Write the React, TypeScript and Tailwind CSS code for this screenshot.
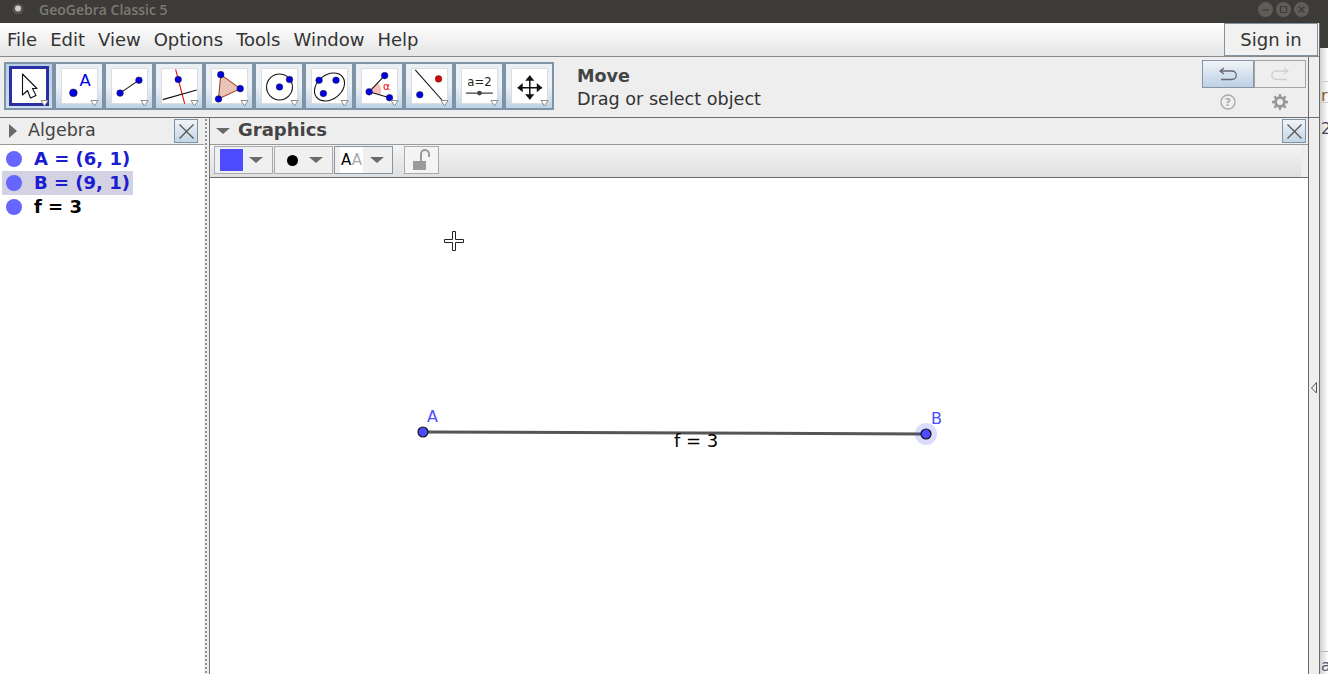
import React from "react";

const Tri = () => (
  <svg width="9" height="8" viewBox="0 0 9 8" className="absolute right-[3px] bottom-[1px]">
    <path d="M1 1.5H8L4.5 7Z" fill="#fff" stroke="#8c8c8c" strokeWidth="1" />
  </svg>
);

const P = ({ x, y, c = "#0000e0", r = 3.4 }: { x: number; y: number; c?: string; r?: number }) => (
  <circle cx={x} cy={y} r={r} fill={c} stroke="#222" strokeWidth="0.5" />
);

const ln = { stroke: "#111", strokeWidth: 1.1 };

const icons: React.ReactNode[] = [
  <path key="0" d="M10.500 5V26L15.500 21.500L18.500 29L24 26.500L20.500 19.500H25Z" fill="#fff" stroke="#111" strokeWidth="1.100" strokeLinejoin="round" />,
  <g key="1">
    <P x={11.7} y={24} r={4} />
    <text x={18} y={17} fontSize="17" fill="#0000e0" fontFamily="'DejaVu Sans'">A</text>
  </g>,
  <g key="2">
    <line x1="8.300" y1="24.300" x2="27.700" y2="11" {...ln} />
    <P x={8.3} y={24.3} />
    <P x={27.7} y={11} />
  </g>,
  <g key="3">
    <line x1="14" y1="0" x2="23.300" y2="35" stroke="#f00000" strokeWidth="1.100" />
    <line x1="0.700" y1="31" x2="35.700" y2="21" {...ln} />
    <P x={16.7} y={10.3} />
  </g>,
  <g key="4">
    <path d="M9 5.300L29 19.700L6.700 30.300Z" fill="#e8c4b8" stroke="#a04020" strokeWidth="1.100" />
    <P x={9} y={5.3} />
    <P x={29} y={19.7} />
    <P x={6.7} y={30.3} />
  </g>,
  <g key="5">
    <circle cx="18" cy="18" r="13.300" fill="none" {...ln} />
    <P x={18} y={18} />
    <P x={28.3} y={10.3} />
  </g>,
  <g key="6">
    <ellipse cx="18" cy="18" rx="17" ry="12.500" transform="rotate(-38 18 18)" fill="none" {...ln} />
    <P x={7.3} y={11} />
    <P x={24.7} y={11} />
    <P x={11.7} y={24.7} />
  </g>,
  <g key="7">
    <path d="M7.300 23L16 13.500A12 12 0 0 1 19 26Z" fill="#f8bcbc" />
    <line x1="7.300" y1="23" x2="23.300" y2="6.300" {...ln} />
    <line x1="7.300" y1="23" x2="28.300" y2="29" {...ln} />
    <P x={7.3} y={23} />
    <P x={23.3} y={6.3} />
    <P x={28.3} y={29} />
    <text x={21.500} y={21} fontSize="11" fill="#f00000" fontFamily="'DejaVu Sans'">α</text>
  </g>,
  <g key="8">
    <line x1="3.300" y1="0.300" x2="34" y2="35" {...ln} />
    <P x={27.3} y={9.7} c="#e00000" />
    <P x={8} y={26} />
  </g>,
  <g key="9">
    <text x={18} y={17} textAnchor="middle" fontSize="12" fill="#222" fontFamily="'DejaVu Sans'">a=2</text>
    <line x1="4" y1="24.300" x2="31.700" y2="24.300" stroke="#222" strokeWidth="1.100" />
    <circle cx="18" cy="24.300" r="2.400" fill="#444" />
  </g>,
  <g key="10">
    <path d="M6 18.700H31M18.300 6.500V30.500" stroke="#111" strokeWidth="1.500" />
    <path d="M18.300 6L23 11.500H13.500ZM18.300 31L23 25.500H13.500ZM5.500 18.700L11 14V23.500ZM31 18.700L25.500 14V23.500Z" fill="#111" />
  </g>,
];

const ToolButton = ({ i }: { i: number }) => (
  <div
    className={
      i === 0
        ? "relative flex h-[48px] w-[50px] shrink-0 items-center justify-center border-2 border-[#7f93a6] bg-gradient-to-b from-[#b7cee4] to-[#cfdeec]"
        : "relative flex h-[48px] w-[50px] shrink-0 items-center justify-center border-2 border-[#7f93a6] bg-gradient-to-b from-[#e8eff5] via-[#edf2f7] to-[#bdd2e6]"
    }
  >
    {i === 0 ? (
      <div className="h-[40px] w-[40px] border-[3px] border-[#2a2fa4] bg-white">
        <svg width="34" height="34" viewBox="0 0 34 34">{icons[0]}</svg>
      </div>
    ) : (
      <div className="flex h-[36px] w-[37px] border border-[#dddddd] bg-white">
        <svg width="36" height="35" viewBox="0 0 36 35">{icons[i]}</svg>
      </div>
    )}
    <Tri />
  </div>
);

const CloseBtn = () => (
  <div className="flex h-[24px] w-[24px] items-center justify-center border border-[#7f93a5] bg-gradient-to-b from-[#f0f4f8] to-[#c3d5e6]">
    <svg width="17" height="17" viewBox="0 0 17 17">
      <path d="M1.500 1.500L15.500 15.500M15.500 1.500L1.500 15.500" stroke="#555" strokeWidth="1.300" />
    </svg>
  </div>
);

const Caret = () => (
  <svg width="14" height="6" viewBox="0 0 14 6" className="block">
    <path d="M0 0H14L7 6Z" fill="#6a6a6a" />
  </svg>
);

const Row = ({ text, color, sel }: { text: string; color: string; sel?: boolean }) => (
  <div className="flex h-[24px] items-center pl-[2px]">
    <div className={`flex h-[24px] items-center ${sel ? "bg-[#d2d2e3]" : ""}`}>
      <span className="ml-[4px] h-[16px] w-[16px] rounded-full bg-[#6666ff]" />
      <span className={`-mt-[1px] ml-[12px] pr-[3px] text-[18px] font-bold ${color}`}>{text}</span>
    </div>
  </div>
);

export default function App() {
  return (
    <div className="flex h-[674px] w-[1328px] flex-col overflow-hidden bg-white font-['DejaVu_Sans',sans-serif] text-[#333]">
      <div className="flex h-[23px] shrink-0 items-center bg-[#3c3b37] pb-[5px] pl-[12px]">
        <svg width="12" height="12" viewBox="0 0 12 12">
          <circle cx="6" cy="6" r="5.500" fill="#55534e" />
          <circle cx="6" cy="5.500" r="3" fill="#cfcdc6" />
        </svg>
        <span className="ml-[15px] font-['Open_Sans',sans-serif] text-[14px] font-semibold text-[#7d7a73]">GeoGebra Classic 5</span>
        <div className="ml-auto mr-[19px] flex gap-[3px]">
          {["M4 8H11", "M4.500 4.500H10.500V10.500H4.500Z", "M4.500 4.500L10.500 10.500M10.500 4.500L4.500 10.500"].map((d) => (
            <svg key={d} width="15" height="15" viewBox="0 0 15 15">
              <circle cx="7.500" cy="7.500" r="7.500" fill="#5f5d58" />
              <path d={d} fill="none" stroke="#3c3b37" strokeWidth="1.200" />
            </svg>
          ))}
        </div>
      </div>
      <div className="flex min-h-0 flex-1">
        <div className="flex w-[1320px] shrink-0 flex-col border-r border-[#6a6a6a]">
          <div className="flex h-[34px] shrink-0 items-center justify-between border-b border-[#8a8a8a] bg-gradient-to-b from-[#ffffff] to-[#e4e4e4] pl-[7px] pr-[1px]">
            <div className="flex gap-[13px] text-[18px] text-[#333]">
              {["File", "Edit", "View", "Options", "Tools", "Window", "Help"].map((m) => (
                <span key={m}>{m}</span>
              ))}
            </div>
            <div className="flex h-[33px] w-[94px] items-center justify-center border border-[#84939f] bg-[#f1f1f1] text-[18px]">Sign in</div>
          </div>
          <div className="flex h-[61px] shrink-0 border-b border-[#6e6e6e] bg-[#eeeeee]">
            <div className="flex w-[1309px] border-r border-[#6e6e6e] pl-[4px] pt-[5px]">
              <div className="flex h-[48px] shrink-0">
                {icons.map((_, i) => (
                  <ToolButton key={i} i={i} />
                ))}
              </div>
              <div className="ml-[23px] mt-[3px] text-[17.600px] leading-[23px]">
                <div className="font-bold text-[#444]">Move</div>
                <div className="text-[#333]">Drag or select object</div>
              </div>
              <div className="ml-auto mr-[2px] -mt-[2px] flex w-[104px] flex-col">
                <div className="flex h-[28px]">
                  <div className="flex w-[52px] items-center justify-center border border-[#8296a8] bg-gradient-to-b from-[#f0f4f8] to-[#bcd1e4]">
                    <svg width="18" height="14" viewBox="0 0 18 14">
                      <path d="M1 4H13A4 4 0 0 1 13 12.500H2M5 1L1 4L5 7" fill="none" stroke="#667" strokeWidth="1.300" />
                    </svg>
                  </div>
                  <div className="flex w-[52px] items-center justify-center border border-[#a5a5a5] bg-[#eeeeee]">
                    <svg width="18" height="14" viewBox="0 0 18 14">
                      <path d="M17 4H5A4 4 0 0 0 5 12.500H16M13 1L17 4L13 7" fill="none" stroke="#cfcfcf" strokeWidth="1.300" />
                    </svg>
                  </div>
                </div>
                <div className="mt-[6px] flex justify-between px-[18px]">
                  <svg width="16" height="16" viewBox="0 0 16 16">
                    <circle cx="8" cy="8" r="7" fill="none" stroke="#aaa" strokeWidth="1.400" />
                    <text x="8" y="12" textAnchor="middle" fontSize="10" fontWeight="700" fill="#aaa" fontFamily="'DejaVu Sans'">?</text>
                  </svg>
                  <svg width="16" height="16" viewBox="0 0 16 16">
                    <circle cx="8" cy="8" r="4.500" fill="none" stroke="#999" strokeWidth="3" />
                    <path d="M8 0V16M0 8H16M2.300 2.300L13.700 13.700M13.700 2.300L2.300 13.700" stroke="#999" strokeWidth="2.400" />
                    <circle cx="8" cy="8" r="3" fill="#eee" />
                  </svg>
                </div>
              </div>
            </div>
          </div>
          <div className="flex min-h-0 flex-1">
            <div className="flex w-[204px] shrink-0 flex-col">
              <div className="flex h-[27px] shrink-0 items-center border-b border-[#999] bg-[#eeeeee] pl-[9px] pr-[6px]">
                <svg width="8" height="14" viewBox="0 0 8 14">
                  <path d="M0 0L8 7L0 14Z" fill="#6a6a6a" />
                </svg>
                <span className="-mt-[2px] ml-[11px] text-[17.500px] text-[#444]">Algebra</span>
                <div className="ml-auto">
                  <CloseBtn />
                </div>
              </div>
              <div className="pt-[2px]">
                <Row text="A = (6, 1)" color="text-[#1c1cd0]" />
                <Row text="B = (9, 1)" color="text-[#1c1cd0]" sel />
                <Row text="f = 3" color="text-black" />
              </div>
            </div>
            <div className="flex w-[6px] shrink-0 border-r border-[#777] bg-[#eeeeee] pl-[1px]">
              <div className="h-full w-[2px] bg-[radial-gradient(circle,#8f959e_1px,transparent_1px)] bg-[length:2px_4px]" />
            </div>
            <div className="flex min-w-0 flex-1 flex-col border-r border-[#6a6a6a]">
              <div className="flex h-[27px] shrink-0 items-center border-b border-[#999] bg-[#eeeeee] pl-[6px] pr-[2px]">
                <Caret />
                <span className="-mt-[3px] ml-[8px] text-[18px] font-bold text-[#444]">Graphics</span>
                <div className="ml-auto">
                  <CloseBtn />
                </div>
              </div>
              <div className="flex h-[33px] shrink-0 border-b border-[#6a6a6a] bg-[#eeeeee]">
                <div className="flex min-w-0 flex-1 items-start gap-[1px] bg-gradient-to-b from-[#f4f4f4] to-[#e0e0e0] pl-[4px] pt-[1px]">
                  <div className="flex h-[28px] w-[59px] items-center border border-[#aaa] bg-[#f0f0f0] pl-[5px]">
                    <span className="h-[22px] w-[23px] bg-[#4d4dff]" />
                    <span className="ml-[6px]"><Caret /></span>
                  </div>
                  <div className="flex h-[28px] w-[59px] items-center border border-[#aaa] bg-[#f0f0f0] pl-[12px]">
                    <span className="h-[11px] w-[11px] rounded-full bg-black" />
                    <span className="ml-[11px]"><Caret /></span>
                  </div>
                  <div className="flex h-[28px] w-[59px] items-center border border-[#8296a8] bg-[#f0f0f0] pl-[5px]">
                    <span className="w-[23px] bg-white text-center text-[15px] leading-[26px] text-black">A<span className="text-[#aaa]">A</span></span>
                    <span className="ml-[7px]"><Caret /></span>
                  </div>
                  <div className="ml-[10px] flex h-[28px] w-[35px] items-center justify-center border border-[#aaa] bg-[#f4f4f4]">
                    <svg width="20" height="22" viewBox="0 0 20 22">
                      <rect x="1" y="12" width="13" height="9" fill="#9a9a9a" />
                      <path d="M9 12V5A4 4 0 0 1 17 5V8" fill="none" stroke="#9a9a9a" strokeWidth="2" />
                    </svg>
                  </div>
                </div>
                <div className="w-[7px] shrink-0" />
              </div>
              <div className="relative min-h-0 flex-1 bg-white">
                <svg className="absolute inset-0 h-full w-full">
                  <path d="M242.500 53.500H245.500V61.500H253.500V64.500H245.500V72.500H242.500V64.500H234.500V61.500H242.500Z" fill="#fff" stroke="#222" strokeWidth="1" />
                  <line x1="213" y1="254" x2="716" y2="256" stroke="#555" strokeWidth="3" />
                  <circle cx="716" cy="256" r="11" fill="#4d4dff" fillOpacity="0.2" />
                  <circle cx="213" cy="254" r="5" fill="#4d4dff" stroke="#111" strokeWidth="1.200" />
                  <circle cx="716" cy="256" r="5" fill="#4d4dff" stroke="#111" strokeWidth="1.200" />
                  <text x="217" y="244" fontSize="16" fill="#4d4dff" fontFamily="'DejaVu Sans'">A</text>
                  <text x="721" y="246" fontSize="16" fill="#4d4dff" fontFamily="'DejaVu Sans'">B</text>
                  <text x="464" y="269" fontSize="18" fill="#000" fontFamily="'DejaVu Sans'">f = 3</text>
                </svg>
              </div>
            </div>
            <div className="relative w-[10px] shrink-0 bg-[#eeeeee]">
              <svg width="6" height="12" viewBox="0 0 6 12" className="absolute left-[2px] top-[264px]">
                <path d="M5.500 0.500V11L0.500 6Z" fill="none" stroke="#555" />
              </svg>
            </div>
          </div>
        </div>
        <div className="flex min-w-0 flex-1 flex-col bg-gradient-to-r from-[#d0d0d0] to-[#ffffff] text-[16px] leading-none">
          <div className="h-[25px] shrink-0 bg-[#3c3b37]" />
          <div className="mt-[33px] h-[22px] border-y border-[#ccc] pl-[1px] pt-[6px] text-[#8a5a2a]">r</div>
          <span className="mt-[18px] pl-[1px] text-[#445]">20</span>
          <span className="mt-auto border-t border-[#bbb] pl-[1px] pt-[6px] text-[#557]">a</span>
        </div>
      </div>
    </div>
  );
}
